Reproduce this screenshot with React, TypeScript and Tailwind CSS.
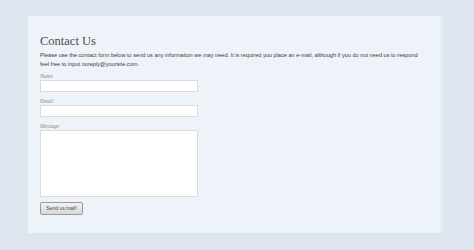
export default function App() {
  return (
    <div className="w-[474px] h-[250px] bg-[#dde6ee] pt-[16px] pl-[28px] overflow-hidden">
      <div className="w-[415px] h-[217px] bg-[#eef3f9] border-r-[3px] border-[#e6edf4] pt-[18px] pl-[12px]">
        <h1 className="text-[#4a4a4a] text-[12.5px] leading-[14px] font-['Liberation_Serif',serif]">
          Contact Us
        </h1>
        <p className="mt-[3px] w-[385px] text-[#3a3a3a] text-[5.6px] leading-[9px] font-['Liberation_Sans',Arial,sans-serif]">
          Please use the contact form below to send us any information we may need. It is required you place an e-mail, although if you do not need us to respond feel free to input noreply@yoursite.com.
        </p>
        <form className="mt-[4px] flex flex-col font-['Liberation_Serif',serif]">
          <label className="text-[5.5px] leading-[6px] italic text-[#888]">Name</label>
          <input className="mt-[1px] w-[158px] h-[12px] bg-white border border-[#d6dce2] outline-none" />
          <label className="mt-[6px] text-[5.5px] leading-[6px] italic text-[#888]">Email</label>
          <input className="mt-[1px] w-[158px] h-[12px] bg-white border border-[#d6dce2] outline-none" />
          <label className="mt-[6px] text-[5.5px] leading-[6px] italic text-[#888]">Message</label>
          <textarea className="mt-[1px] w-[158px] h-[67px] bg-white border border-[#d6dce2] outline-none resize-none" />
          <div className="mt-[5px] flex">
            <button
              type="button"
              className="w-[43px] h-[13px] rounded-[2px] border border-[#9a9a9a] bg-gradient-to-b from-[#f2f2f2] to-[#d9d9d9] text-[5px] leading-[11px] text-[#444] font-['Liberation_Sans',Arial,sans-serif]"
            >
              Send us mail!
            </button>
          </div>
        </form>
      </div>
    </div>
  );
}
